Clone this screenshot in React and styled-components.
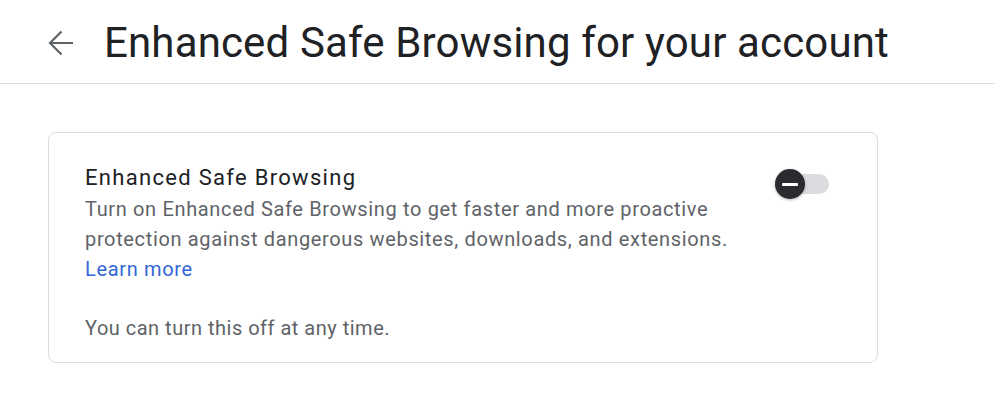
import React from "react";
import styled, { createGlobalStyle } from "styled-components";

const Global = createGlobalStyle`
  body {
    margin: 0;
    background: #fff;
    font-family: Roboto, "Noto Sans", sans-serif;
  }
`;

function App() {
  return (
    <>
      <Global />
      <Page>
        <Header>
          <BackButton aria-label="Back">
            <svg width="26" height="26" viewBox="0 0 26 26">
              <path
                d="M25 13H2M13.5 1.5L2 13l11.5 11.5"
                fill="none"
                stroke="#5f6368"
                strokeWidth="2.2"
              />
            </svg>
          </BackButton>
          <Title>Enhanced Safe Browsing for your account</Title>
        </Header>
        <Content>
          <Card>
            <Row>
              <TextBlock>
                <CardTitle>Enhanced Safe Browsing</CardTitle>
                <Description>
                  Turn on Enhanced Safe Browsing to get faster and more proactive
                  protection against dangerous websites, downloads, and extensions.
                </Description>
                <Link href="#">Learn more</Link>
              </TextBlock>
              <Toggle>
                <Track />
                <Knob>
                  <Minus />
                </Knob>
              </Toggle>
            </Row>
            <Note>You can turn this off at any time.</Note>
          </Card>
        </Content>
      </Page>
    </>
  );
}

export default App;

const Page = styled.div`
  width: 100%;
`;

const Header = styled.div`
  display: flex;
  align-items: center;
  height: 84px;
  border-bottom: 1px solid #dadce0;
  padding-left: 47px;
  box-sizing: border-box;
`;

const BackButton = styled.div`
  display: flex;
  align-items: center;
  justify-content: center;
  width: 28px;
  height: 28px;
  margin-right: 29px;
  margin-top: 2px;
`;

const Title = styled.h1`
  margin: 0;
  font-size: 42px;
  font-weight: 400;
  color: #202124;
  letter-spacing: 0.15px;
  line-height: 50px;
  margin-top: 2px;
`;

const Content = styled.div`
  padding: 48px 48px;
`;

const Card = styled.div`
  width: 830px;
  box-sizing: border-box;
  border: 1px solid #dadce0;
  border-radius: 8px;
  padding: 30px 36px 19px 36px;
`;

const Row = styled.div`
  display: flex;
  justify-content: space-between;
  align-items: flex-start;
`;

const TextBlock = styled.div`
  display: flex;
  flex-direction: column;
`;

const CardTitle = styled.div`
  font-size: 22px;
  line-height: 30px;
  letter-spacing: 1.3px;
  color: #202124;
  margin-bottom: 1px;
`;

const Description = styled.div`
  font-size: 20px;
  line-height: 30px;
  letter-spacing: 0.65px;
  color: #5f6368;
  width: 660px;
`;

const Link = styled.a`
  font-size: 20px;
  line-height: 30px;
  letter-spacing: 0.65px;
  color: #3367d6;
  text-decoration: none;
`;

const Note = styled.div`
  font-size: 20px;
  line-height: 30px;
  letter-spacing: 0.5px;
  color: #5f6368;
  margin-top: 29px;
`;

const Toggle = styled.div`
  position: relative;
  width: 54px;
  height: 30px;
  margin-top: 6px;
  margin-right: 12px;
`;

const Track = styled.div`
  position: absolute;
  left: 8px;
  right: 0;
  top: 5px;
  height: 20px;
  border-radius: 10px;
  background: #dadce0;
`;

const Knob = styled.div`
  position: absolute;
  left: 0;
  top: 0;
  width: 30px;
  height: 30px;
  border-radius: 50%;
  background: #2a2b2e;
  box-shadow: 0 1px 3px rgba(0, 0, 0, 0.3);
  display: flex;
  align-items: center;
  justify-content: center;
`;

const Minus = styled.div`
  width: 16px;
  height: 3px;
  background: #fff;
  border-radius: 1px;
`;
